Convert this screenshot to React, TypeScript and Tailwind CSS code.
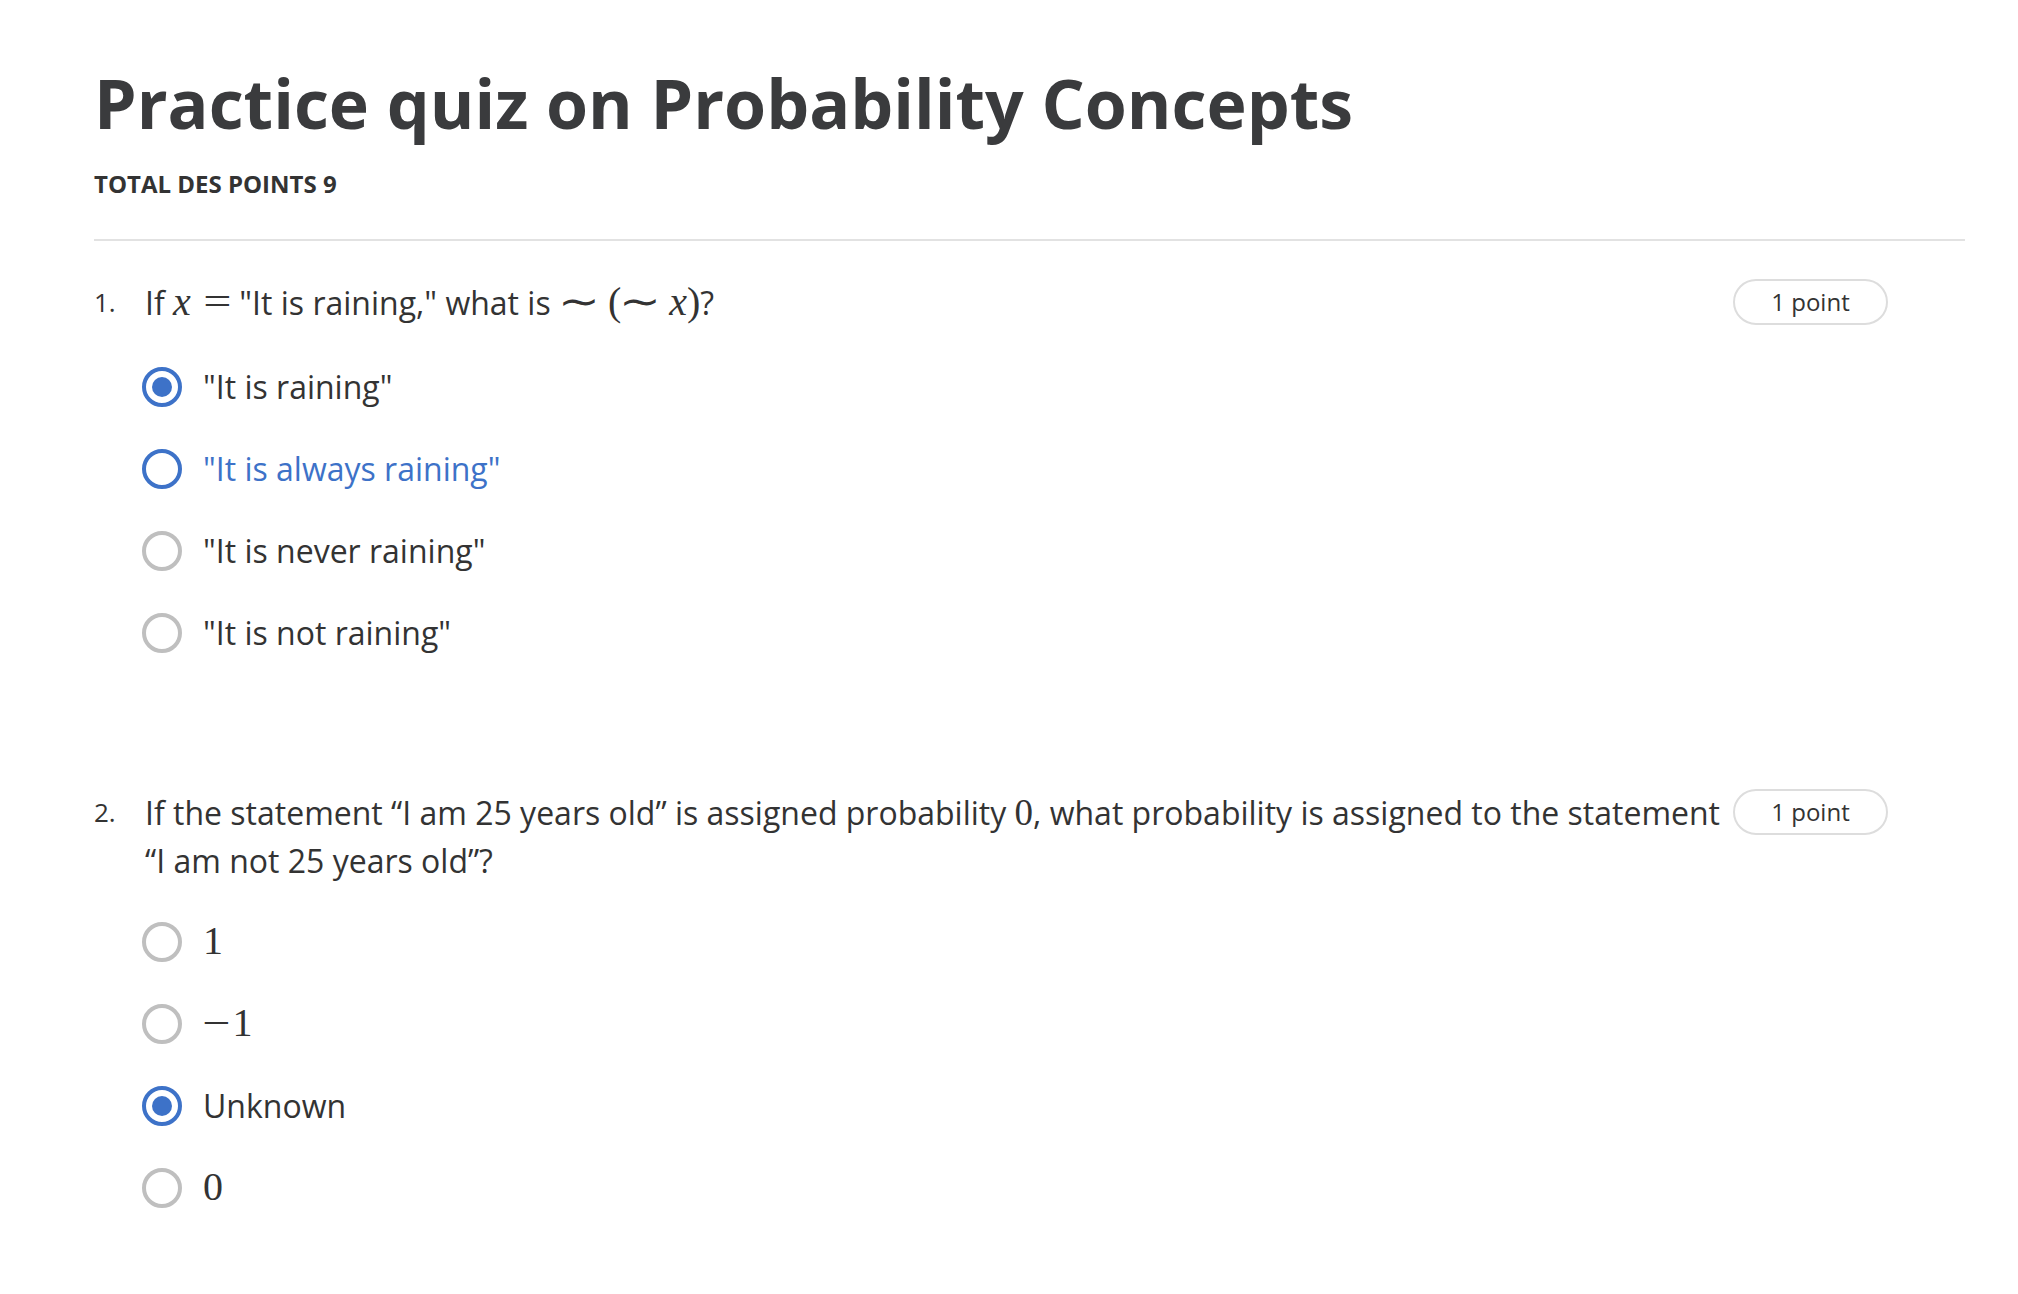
import React from 'react';

type Option = { label: React.ReactNode; state?: 'checked' | 'hover' };

const math = 'font-["Liberation_Serif",serif] text-[40px] leading-none';

function Radio({ state }: { state?: 'checked' | 'hover' }) {
  if (state === 'checked') {
    return (
      <span className="flex h-[40px] w-[40px] shrink-0 items-center justify-center rounded-full border-[4px] border-[#3d72c8]">
        <span className="h-[20px] w-[20px] rounded-full bg-[#3d72c8]" />
      </span>
    );
  }
  return (
    <span
      className={
        state === 'hover'
          ? 'h-[40px] w-[40px] shrink-0 rounded-full border-[4px] border-[#3d72c8]'
          : 'h-[40px] w-[40px] shrink-0 rounded-full border-[4px] border-[#bfbfbf]'
      }
    />
  );
}

function PointBadge() {
  return (
    <div className="flex h-[46px] w-[155px] shrink-0 items-center justify-center rounded-full border-2 border-[#dddddd] text-[24px] text-[#333]">
      1 point
    </div>
  );
}

function Question({
  num,
  text,
  options,
  gapTop,
}: {
  num: string;
  text: React.ReactNode;
  options: Option[];
  gapTop: string;
}) {
  return (
    <section>
      <div className="flex items-start pr-[77px]">
        <div className="w-[51px] shrink-0 text-[26px] leading-[46px]">{num}</div>
        <div className="flex-1 pr-[6px] text-[32px] leading-[48px]">{text}</div>
        <PointBadge />
      </div>
      <ul className={`${gapTop} flex flex-col gap-[42px] pl-[48px]`}>
        {options.map((o, i) => (
          <li key={i} className="flex h-[40px] items-center gap-[21px]">
            <Radio state={o.state} />
            <span
              className={
                o.state === 'hover'
                  ? 'text-[32px] text-[#3d72c8]'
                  : 'text-[32px] text-[#333]'
              }
            >
              {o.label}
            </span>
          </li>
        ))}
      </ul>
    </section>
  );
}

export default function App() {
  return (
    <div className='min-h-screen bg-white font-["Open_Sans",sans-serif] text-[#333]'>
      <div className="ml-[94px] w-[1871px] pt-[58px]">
        <h1 className="text-[68px] font-bold leading-[90px] text-[#3a3b3d]">
          Practice quiz on Probability Concepts
        </h1>
        <p className="mt-[18px] text-[24px] font-bold text-[#333]">TOTAL DES POINTS 9</p>
        <hr className="mt-[37px] border-t-2 border-[#e2e2e2]" />

        <div className="mt-[38px]">
          <Question
            num="1."
            gapTop="mt-[40px]"
            text={
              <>
                <span>If </span>
                <span className={`${math} mr-[15px] italic`}>x</span>
                <span className={`${math} mr-[11px] inline-block scale-x-125`}>=</span>
                <span>"It is raining," what is </span>
                <span className={math}>
                  <span className="mx-[3px] mr-[12px] inline-block scale-x-125">∼</span>(
                  <span className="ml-[2px] mr-[12px] inline-block scale-x-125">∼</span>
                  <span className="italic">x</span>)
                </span>
                <span>?</span>
              </>
            }
            options={[
              { label: '"It is raining"', state: 'checked' },
              { label: '"It is always raining"', state: 'hover' },
              { label: '"It is never raining"' },
              { label: '"It is not raining"' },
            ]}
          />
        </div>

        <div className="mt-[136px]">
          <Question
            num="2."
            gapTop="mt-[37px]"
            text={
              <>
                <span>If the statement “I am 25 years old” is assigned probability </span>
                <span className='font-["Liberation_Serif",serif] text-[37px] leading-none'>0</span>
                <span>, what probability is assigned to the statement </span>
                <span>“I am not 25 years old”?</span>
              </>
            }
            options={[
              { label: <span className={math}>1</span> },
              {
                label: (
                  <span className={math}>
                    <span className="ml-[2px] mr-[5px] inline-block scale-x-125">−</span>1
                  </span>
                ),
              },
              { label: 'Unknown', state: 'checked' },
              { label: <span className={math}>0</span> },
            ]}
          />
        </div>
      </div>
    </div>
  );
}
